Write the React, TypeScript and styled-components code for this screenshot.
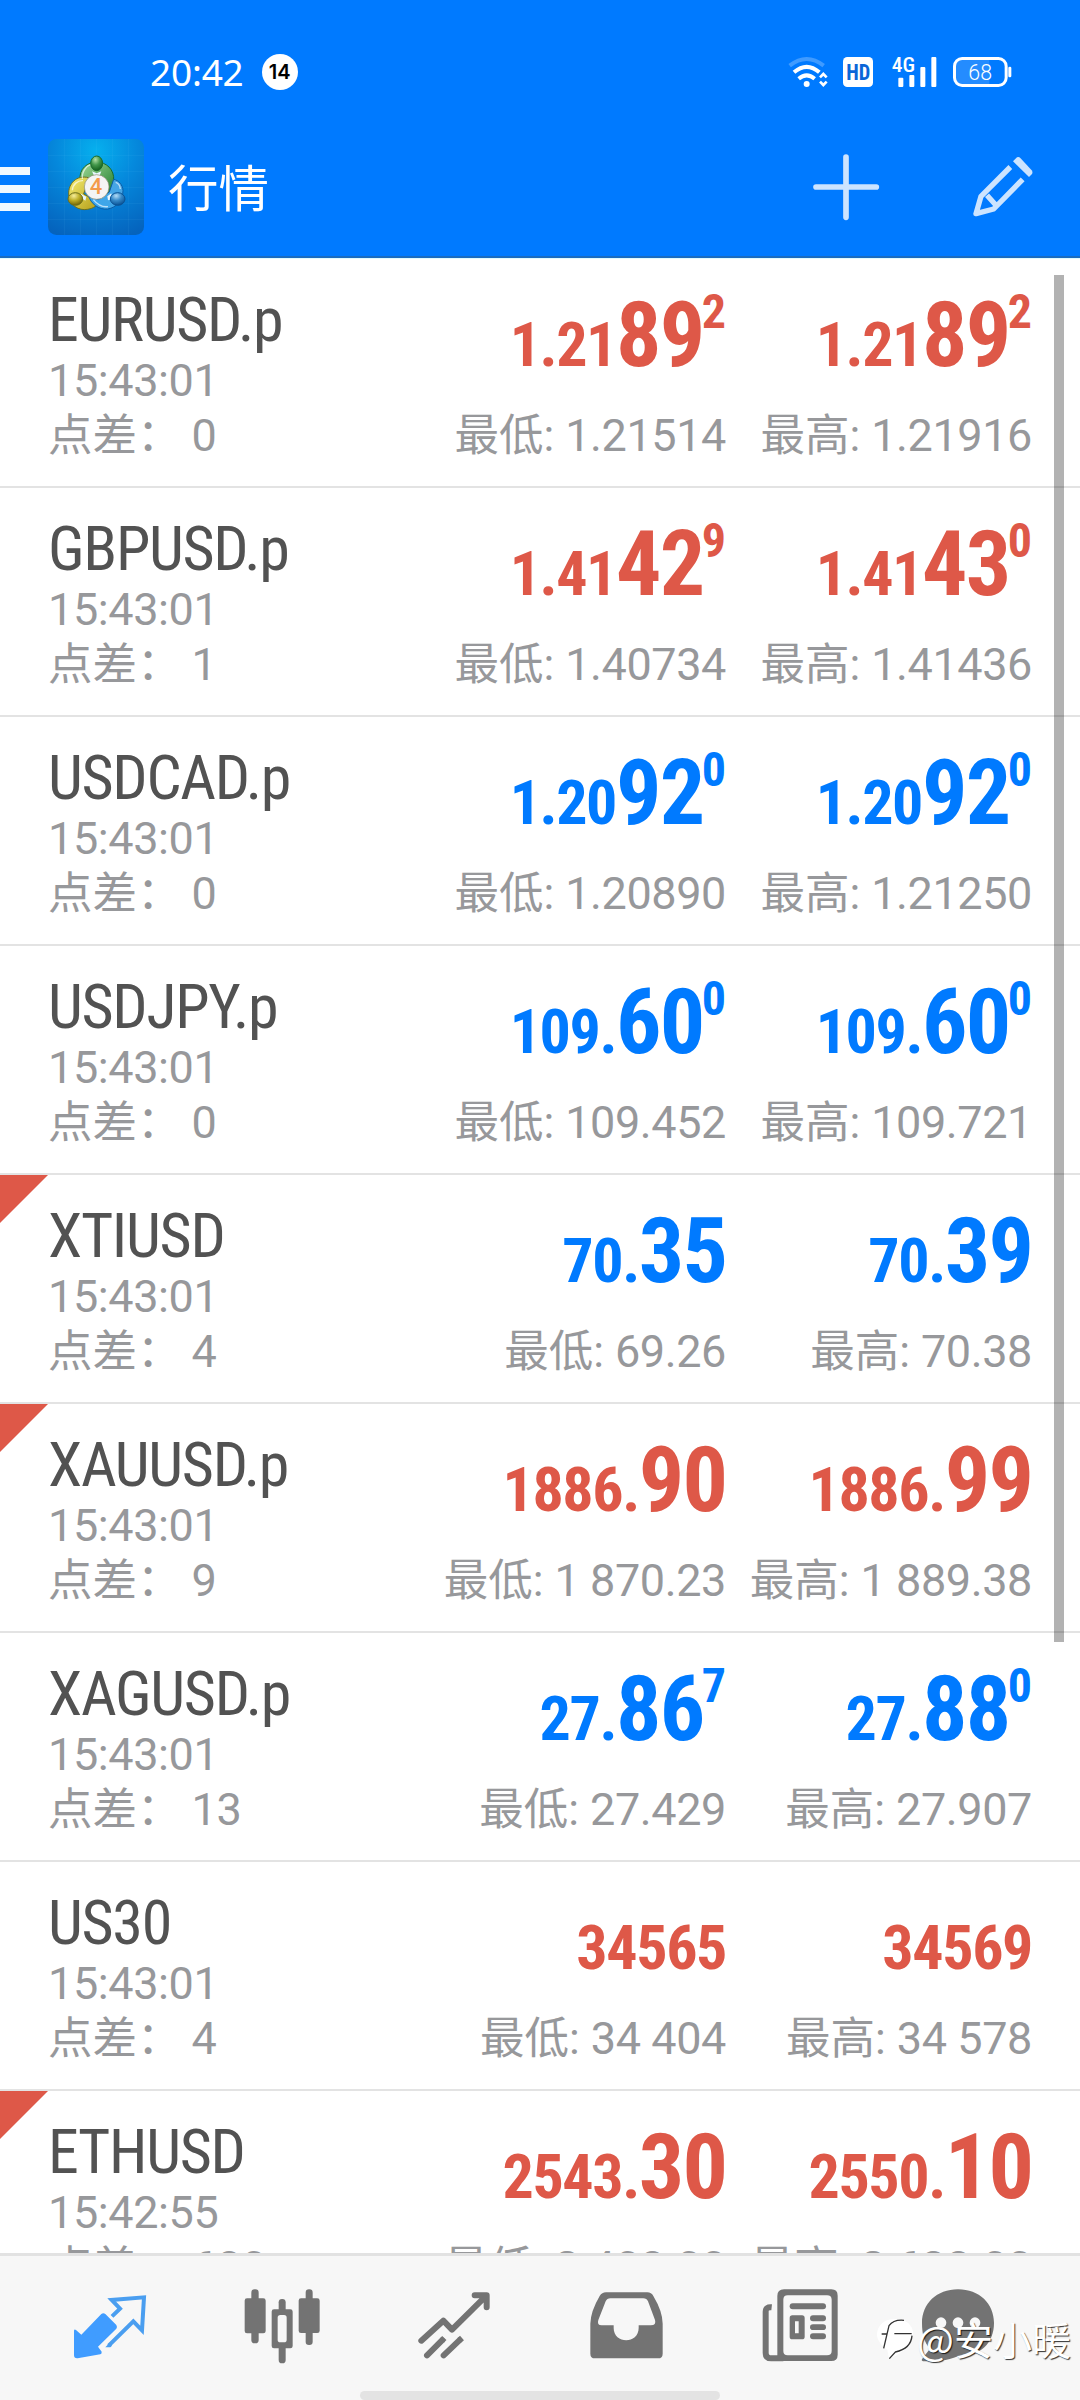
import React from "react";
import styled, { createGlobalStyle, css } from "styled-components";

const BLUE = "#007aff";
const RED = "#de5848";
const GREY = "#97989b";
const ICON = "#737373";

const GlobalStyle = createGlobalStyle`
  *, *::before, *::after { box-sizing: border-box; }
  body { margin: 0; background: #fff; font-family: Roboto, "Noto Sans CJK SC", sans-serif; }
  svg { display: block; overflow: visible; flex: none; }
`;

const Screen = styled.div`
  position: relative;
  display: flex;
  flex-direction: column;
  width: 1080px;
  height: 2400px;
  overflow: hidden;
  background: #fff;
`;

const Header = styled.header`
  flex: none;
  height: 259px;
  background: ${BLUE};
  border-bottom: 1px solid #dffbff;
  box-shadow: inset 0 -2px 0 #1a6cc0;
`;

const StatusBar = styled.div`
  display: flex;
  align-items: center;
  height: 120px;
  padding: 24px 68px 0 150px;
  color: #fff;
`;

const Clock = styled.span`
  font-family: "Noto Sans", sans-serif;
  font-size: 37px;
  line-height: 40px;
  letter-spacing: -0.2px;
`;

const CountBadge = styled.span`
  display: flex;
  align-items: center;
  justify-content: center;
  width: 36px;
  height: 36px;
  margin-left: 18px;
  border-radius: 50%;
  background: #fff;
  color: #000;
  font: 600 20px/36px Inter, sans-serif;
`;

const StatusIcons = styled.div`
  display: flex;
  gap: 16.5px;
  margin-left: auto;
`;

const Toolbar = styled.div`
  display: flex;
  align-items: center;
  height: 134px;
  padding-right: 47px;
`;

const MenuButton = styled.button`
  display: flex;
  flex-direction: column;
  gap: 10px;
  width: 30px;
  margin: 4px 18px 0 0;
  padding: 0;
  border: 0;
  background: none;
`;

const MenuLine = styled.span`
  height: 8px;
  background: #f0f8ff;
`;

const Title = styled.h1`
  margin: 6px auto 0 24px;
  color: #fff;
  font: 400 50.5px/60px Roboto, "Noto Sans CJK SC", sans-serif;
`;

const ToolButton = styled.button`
  padding: 0;
  margin-left: 94px;
  border: 0;
  background: none;
`;

const List = styled.main`
  position: relative;
  flex: 1;
  min-height: 0;
  overflow: hidden;
`;

const ScrollThumb = styled.div`
  position: absolute;
  top: 16px;
  right: 16px;
  width: 10px;
  height: 1367px;
  background: rgba(0, 0, 0, 0.3);
`;

const Row = styled.section<{ $flag?: boolean }>`
  position: relative;
  display: grid;
  grid-template-columns: 1fr 306px 306px;
  height: 229px;
  padding: 30px 48px 0 48px;
  border-bottom: 2px solid #e3e3e3;
  ${p => p.$flag && css`
    &::before {
      content: "";
      position: absolute;
      left: 0;
      top: 0;
      width: 48px;
      height: 48px;
      background: ${RED};
      clip-path: polygon(0 0, 100% 0, 0 100%);
    }
  `}
`;

const Column = styled.div<{ $end?: boolean }>`
  display: flex;
  flex-direction: column;
  align-items: ${p => (p.$end ? "flex-end" : "flex-start")};
  white-space: nowrap;
`;

const SymbolName = styled.div`
  color: #525252;
  font: 400 62px/62px "Roboto Condensed", Roboto, sans-serif;
  letter-spacing: -1.3px;
`;

const Time = styled.div`
  color: ${GREY};
  font-size: 45px;
  line-height: 60px;
  letter-spacing: -0.4px;
`;

const Detail = styled.div`
  display: flex;
  color: ${GREY};
  font-size: 45px;
  line-height: 49px;
  letter-spacing: -0.4px;
`;

const DetailLabel = styled.span<{ $gap: number }>`
  margin: 1px ${p => p.$gap}px 0 0;
  font-family: Roboto, "Noto Sans CJK SC", sans-serif;
  font-size: 44.5px;
  font-weight: 400;
  letter-spacing: 0;
`;

const Price = styled.div<{ $up: boolean }>`
  height: 122px;
  padding-top: 1px;
  color: ${p => (p.$up ? BLUE : RED)};
  font: 700 90px/92px "Roboto Condensed", Roboto, sans-serif;
  letter-spacing: -1.9px;
`;

const PriceSmall = styled.span`
  font-size: 62px;
  line-height: 0;
  letter-spacing: -1.4px;
`;

const PriceSup = styled.span`
  margin-left: -1.5px;
  font-size: 48px;
  line-height: 0;
  vertical-align: 38px;
  letter-spacing: 0;
`;

const TabBar = styled.nav`
  position: relative;
  display: flex;
  flex: none;
  gap: 92px;
  height: 147px;
  padding: 30.67px 0 0 70px;
  border-top: 3px solid #e2e2e2;
  background: #f7f7f7;
`;

const Tab = styled.button<{ $shift?: number }>`
  height: 80px;
  padding: 0;
  margin-left: ${p => p.$shift ?? 0}px;
  border: 0;
  background: none;
`;

const HomeIndicator = styled.div`
  position: absolute;
  left: 360px;
  bottom: 0;
  width: 360px;
  height: 9px;
  border-radius: 5px;
  background: #e3e3e3;
`;

const Watermark = styled.div`
  position: absolute;
  right: 9px;
  bottom: 38px;
  display: flex;
  align-items: center;
  color: #fff;
  font: 400 39px/48px "Noto Sans CJK SC", sans-serif;
  text-shadow: 1px 1px 1px rgba(0, 0, 0, 0.8);
`;

type Quote = [string, string, string];
type Item = {
  name: string; time: string; spread: string; up: boolean; flag?: boolean;
  bid: Quote; ask: Quote; low: string; high: string;
};

const items: Item[] = [
  { name: "EURUSD.p", time: "15:43:01", spread: "0", up: false, bid: ["1.21", "89", "2"], ask: ["1.21", "89", "2"], low: "1.21514", high: "1.21916" },
  { name: "GBPUSD.p", time: "15:43:01", spread: "1", up: false, bid: ["1.41", "42", "9"], ask: ["1.41", "43", "0"], low: "1.40734", high: "1.41436" },
  { name: "USDCAD.p", time: "15:43:01", spread: "0", up: true, bid: ["1.20", "92", "0"], ask: ["1.20", "92", "0"], low: "1.20890", high: "1.21250" },
  { name: "USDJPY.p", time: "15:43:01", spread: "0", up: true, bid: ["109.", "60", "0"], ask: ["109.", "60", "0"], low: "109.452", high: "109.721" },
  { name: "XTIUSD", time: "15:43:01", spread: "4", up: true, flag: true, bid: ["70.", "35", ""], ask: ["70.", "39", ""], low: "69.26", high: "70.38" },
  { name: "XAUUSD.p", time: "15:43:01", spread: "9", up: false, flag: true, bid: ["1886.", "90", ""], ask: ["1886.", "99", ""], low: "1 870.23", high: "1 889.38" },
  { name: "XAGUSD.p", time: "15:43:01", spread: "13", up: true, bid: ["27.", "86", "7"], ask: ["27.", "88", "0"], low: "27.429", high: "27.907" },
  { name: "US30", time: "15:43:01", spread: "4", up: false, bid: ["34565", "", ""], ask: ["34569", "", ""], low: "34 404", high: "34 578" },
  { name: "ETHUSD", time: "15:42:55", spread: "680", up: false, flag: true, bid: ["2543.", "30", ""], ask: ["2550.", "10", ""], low: "2 408.00", high: "2 638.00" },
];

function QuoteColumn({ quote, up, label, value }: { quote: Quote; up: boolean; label: string; value: string }) {
  const [small, big, sup] = quote;
  return (
    <Column $end>
      <Price $up={up}>
        <PriceSmall>{small}</PriceSmall>{big}{sup && <PriceSup>{sup}</PriceSup>}
      </Price>
      <Detail><DetailLabel $gap={11}>{label}:</DetailLabel>{value}</Detail>
    </Column>
  );
}

function QuoteRow({ item }: { item: Item }) {
  return (
    <Row $flag={item.flag}>
      <Column>
        <SymbolName>{item.name}</SymbolName>
        <Time>{item.time}</Time>
        <Detail><DetailLabel $gap={10}>点差：</DetailLabel>{item.spread}</Detail>
      </Column>
      <QuoteColumn quote={item.bid} up={item.up} label="最低" value={item.low} />
      <QuoteColumn quote={item.ask} up={item.up} label="最高" value={item.high} />
    </Row>
  );
}

const WifiIcon = () => (
  <svg width="42" height="34" viewBox="43 45 126 102" fill="none" stroke="#fff" strokeWidth="12">
    <path d="M57 77Q108 37 159 77" opacity=".25" />
    <path d="M70 97Q108 64 146 97" />
    <path d="M84 116Q108 96 132 116" />
    <circle cx="108" cy="132" r="9" fill="#fff" stroke="none" />
    <path d="M148 112L158 102L168 112M148 125L158 135L168 125" strokeWidth="8" />
  </svg>
);

const HdIcon = () => (
  <svg width="30" height="34" viewBox="219 45 90 102">
    <rect x="219" y="51" width="90" height="90" rx="13" fill="#fff" />
    <text x="229" y="120" fontFamily="Roboto Condensed, sans-serif" fontWeight="700" fontSize="68" textLength="72" lengthAdjust="spacingAndGlyphs" fill="#0b66d8">HD</text>
  </svg>
);

const SignalIcon = () => (
  <svg width="47" height="34" viewBox="356 45 141 102" fill="#fff">
    <text x="361" y="96" fontFamily="Roboto Condensed, sans-serif" fontWeight="500" fontSize="60" textLength="70" lengthAdjust="spacingAndGlyphs">4G</text>
    <rect x="381" y="113" width="15" height="28" rx="3" />
    <rect x="414" y="105" width="15" height="36" rx="3" />
    <rect x="447" y="81" width="15" height="60" rx="3" />
    <rect x="480" y="51" width="15" height="90" rx="3" />
  </svg>
);

const BatteryIcon = () => (
  <svg width="59" height="34" viewBox="548 45 177 102" fill="#fff">
    <path d="M575 55H657V137H575Q552 137 552 113V79Q552 55 575 55Z" opacity=".14" />
    <rect x="552.5" y="55.5" width="155" height="81" rx="23" fill="none" stroke="#fff" strokeWidth="9" />
    <rect x="714" y="80" width="9" height="32" rx="4" />
    <text x="594" y="119" fontFamily="Roboto, sans-serif" fontWeight="300" fontSize="66" textLength="71" lengthAdjust="spacingAndGlyphs">68</text>
  </svg>
);

const AppLogo = () => (
  <svg width="96" height="96" viewBox="54 57 288 288">
    <defs>
      <radialGradient id="lgBg" cx=".5" cy=".12" r=".95">
        <stop offset="0" stopColor="#06b0ee" /><stop offset=".45" stopColor="#0588dc" /><stop offset="1" stopColor="#0563bd" />
      </radialGradient>
      <linearGradient id="lgG" x1="0" y1="0" x2="1" y2="1"><stop offset="0" stopColor="#a4dc9a" /><stop offset="1" stopColor="#1d7c2c" /></linearGradient>
      <linearGradient id="lgY" x1="0" y1="0" x2="1" y2="1"><stop offset="0" stopColor="#f5ee73" /><stop offset="1" stopColor="#b39c16" /></linearGradient>
      <linearGradient id="lgB" x1="1" y1="0" x2="0" y2="1"><stop offset="0" stopColor="#4aa5e2" /><stop offset="1" stopColor="#38a6ec" /></linearGradient>
      <radialGradient id="hdG" cx=".4" cy=".25" r=".75"><stop offset="0" stopColor="#b2e0a6" /><stop offset=".5" stopColor="#42974a" /><stop offset="1" stopColor="#14601d" /></radialGradient>
      <radialGradient id="hdY" cx=".4" cy=".25" r=".75"><stop offset="0" stopColor="#f6ee9c" /><stop offset=".5" stopColor="#bdae27" /><stop offset="1" stopColor="#736507" /></radialGradient>
      <radialGradient id="hdB" cx=".4" cy=".25" r=".75"><stop offset="0" stopColor="#b4dcf6" /><stop offset=".5" stopColor="#3589c9" /><stop offset="1" stopColor="#0a5294" /></radialGradient>
    </defs>
    <rect x="54" y="57" width="288" height="288" rx="25" fill="url(#lgBg)" />
    <path d="M103 57V345M151 57V345M200 57V345M248 57V345M296 57V345M54 106H342M54 154H342M54 203H342M54 251H342M54 299H342" stroke="#7fd4ff" strokeOpacity=".13" strokeWidth="2" fill="none" />
    <path d="M150 182C146 145 174 126 200 126C228 126 254 148 251 182C249 205 238 219 226 225L206 180L178 185Z" fill="url(#lgG)" stroke="#196b2c" strokeWidth="3" />
    <path d="M176 173C139 164 115 191 116 222C117 256 146 273 173 268C192 265 201 256 206 247L161 222Z" fill="url(#lgY)" stroke="#6d701d" strokeWidth="3" />
    <path d="M175 226C183 252 206 270 233 267C261 263 279 238 279 212C278 194 266 181 251 178L238 216L205 239Z" fill="url(#lgB)" stroke="#0a5ca6" strokeWidth="3" />
    <path d="M157 177C155 151 173 134 186 134M127 211C128 193 143 181 159 182M190 239C203 255 218 262 234 260M271 207C270 197 264 189 257 187" fill="none" stroke="#fff" strokeOpacity=".65" strokeWidth="4" />
    <path d="M186 154L200 160L214 154L209 167H192ZM152 221L156 235L166 242L169 230ZM232 229L244 220L246 238L234 241Z" fill="#e8f6ff" />
    <ellipse cx="200" cy="130" rx="18" ry="22" fill="url(#hdG)" stroke="#196b2c" strokeWidth="3" />
    <ellipse cx="136" cy="237" rx="22" ry="19" fill="url(#hdY)" stroke="#6d701d" strokeWidth="3" />
    <ellipse cx="263" cy="237" rx="22" ry="19" fill="url(#hdB)" stroke="#0a5294" strokeWidth="3" />
    <circle cx="200" cy="201" r="37" fill="#f4f4f4" stroke="#8a8a70" strokeWidth="2" />
    <text x="198" y="222" textAnchor="middle" fontFamily="Roboto, sans-serif" fontSize="66" fontWeight="500" fill="#f39a4a">4</text>
  </svg>
);

const PlusIcon = () => (
  <svg width="66" height="66" viewBox="129 342 198 198" stroke="#cce4ff" strokeWidth="17" strokeLinecap="round">
    <path d="M228 351V532M138 441H319" />
  </svg>
);

const PencilIcon = () => (
  <svg width="60" height="66" viewBox="608 341 180 198" fill="none" stroke="#cce4ff" strokeWidth="16" strokeLinejoin="round">
    <path d="M720 380L632 468L617 520L670 506L757 417M650 465L679 497" />
    <path d="M728 363L740 351Q746 349 750 353L784 390Q788 396 785 401L776 410Z" fill="#cce4ff" stroke="none" />
  </svg>
);

const QuotesIcon = () => (
  <svg width="80" height="80" viewBox="30 20 240 240">
    <path d="M124 101Q130 96 136 101L169 134Q173 140 169 145L114 199L125 214Q126 221 121 222L53 234Q42 235 42 225V151Q43 145 48 149L64 163Z" fill="#409cff" />
    <path d="M156 108L180 85L155 59L252 51L246 150L220 123L146 196" fill="none" stroke="#4a9ef0" strokeWidth="12" />
    <path d="M136 201H151L156 196L148 188Z" fill="#4a9ef0" />
  </svg>
);

const ChartIcon = () => (
  <svg width="80" height="80" viewBox="544 20 240 240" fill={ICON}>
    <rect x="572" y="27" width="22" height="162" rx="10" />
    <rect x="552" y="54" width="63" height="105" rx="7" />
    <rect x="735" y="27" width="21" height="167" rx="10" />
    <rect x="714" y="54" width="63" height="104" rx="7" />
    <rect x="654" y="56" width="21" height="193" rx="10" />
    <rect x="633" y="87" width="63" height="117" rx="7" />
    <rect x="651" y="104" width="27" height="82" rx="8" fill="#f7f7f7" />
  </svg>
);

const TradeIcon = () => (
  <svg width="80" height="80" viewBox="40 20 240 240" fill="none" stroke={ICON} strokeWidth="18" strokeLinecap="round" strokeLinejoin="round">
    <path d="M62 181L128 121L154 148L257 46M222 45H258V81" />
    <path d="M79 225L124 180M129 225L176 180" />
    <path d="M124 180L131 173M176 180L184 173" strokeLinecap="butt" />
  </svg>
);

const InboxIcon = () => (
  <svg width="80" height="80" viewBox="558 20 240 240">
    <path fillRule="evenodd" fill={ICON} d="M618 36H742Q754 36 760 47Q788 94 788 130V220Q788 234 774 234H585Q571 234 571 220V130Q572 93 599 47Q606 36 618 36ZM631 54Q621 54 617 63L595 119Q590 135 605 135H641V143C641 192 716 192 716 143V135H752Q770 135 765 119L744 63Q740 54 730 54Z" />
  </svg>
);

const NewsIcon = () => (
  <svg width="80" height="80" viewBox="24 20 240 240" fill={ICON}>
    <path d="M65 81Q47 79 47 94V217Q47 234 64 234H100" fill="none" stroke={ICON} strokeWidth="18" />
    <path fillRule="evenodd" d="M102 27H244Q263 27 263 46V223Q263 242 244 242H82V47Q82 27 102 27ZM113 45Q100 45 100 58V212Q100 225 113 225H231Q245 225 245 212V58Q245 45 231 45Z" />
    <rect x="119" y="69" width="109" height="18" rx="9" />
    <path fillRule="evenodd" d="M127 105H156Q164 105 164 113V169Q164 177 156 177H127Q119 177 119 169V113Q119 105 127 105ZM135 123V159H146V123Z" />
    <rect x="180" y="105" width="48" height="18" rx="9" />
    <rect x="180" y="132" width="48" height="17" rx="9" />
    <rect x="180" y="159" width="48" height="18" rx="9" />
  </svg>
);

const ChatIcon = () => (
  <svg width="80" height="80" viewBox="504 20 240 240" fill={ICON}>
    <path d="M624 27C688 27 732 70 732 128C732 190 688 230 624 228C590 242 560 243 519 243Q512 241 518 234L540 205C522 186 516 160 516 128C516 70 560 27 624 27Z" />
    <g fill="#f7f7f7"><circle cx="573" cy="127" r="16" /><circle cx="624" cy="127" r="16" /><circle cx="675" cy="127" r="16" /></g>
  </svg>
);

const LeafMark = () => (
  <svg width="40" height="46" viewBox="390 118 120 138" fill="none">
    <path d="M445 130C400 128 385 165 392 188C398 205 410 215 421 222L426 249C455 240 492 215 498 178C500 150 480 131 445 130Z" fill="#fff" />
    <path d="M410 218L426 150Q440 131 471 134M404 175H421M442 174H494M495 180C493 206 478 222 445 229L427 249" stroke="#333" strokeWidth="4" />
  </svg>
);

export default function App() {
  return (
    <Screen>
      <GlobalStyle />
      <Header>
        <StatusBar>
          <Clock>20:42</Clock>
          <CountBadge>14</CountBadge>
          <StatusIcons><WifiIcon /><HdIcon /><SignalIcon /><BatteryIcon /></StatusIcons>
        </StatusBar>
        <Toolbar>
          <MenuButton aria-label="menu"><MenuLine /><MenuLine /><MenuLine /></MenuButton>
          <AppLogo />
          <Title>行情</Title>
          <ToolButton><PlusIcon /></ToolButton>
          <ToolButton><PencilIcon /></ToolButton>
        </Toolbar>
      </Header>
      <List>
        {items.map(item => <QuoteRow key={item.name} item={item} />)}
        <ScrollThumb />
      </List>
      <TabBar>
        <Tab><QuotesIcon /></Tab>
        <Tab><ChartIcon /></Tab>
        <Tab><TradeIcon /></Tab>
        <Tab><InboxIcon /></Tab>
        <Tab><NewsIcon /></Tab>
        <Tab $shift={-12}><ChatIcon /></Tab>
        <HomeIndicator />
        <Watermark><LeafMark />@安小暖</Watermark>
      </TabBar>
    </Screen>
  );
}
